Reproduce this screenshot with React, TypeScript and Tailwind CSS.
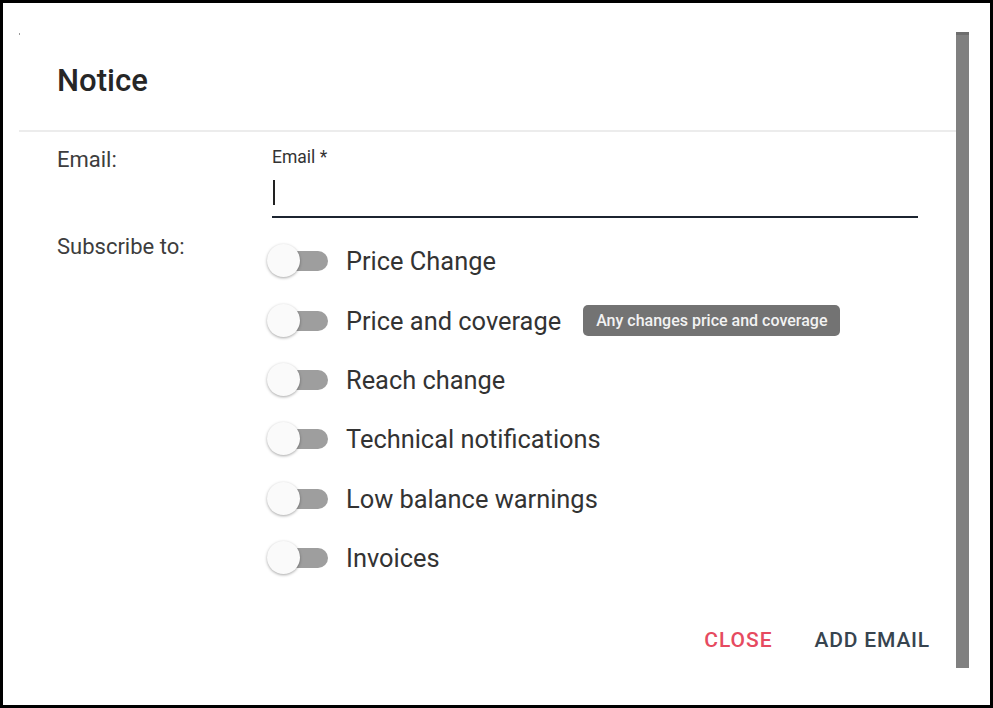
import React from "react"

const options = [
  { label: "Price Change" },
  { label: "Price and coverage", hint: "Any changes price and coverage" },
  { label: "Reach change" },
  { label: "Technical notifications" },
  { label: "Low balance warnings" },
  { label: "Invoices" },
]

function Toggle() {
  return (
    <div className="relative w-[62px] h-[34px] shrink-0">
      <div className="absolute left-[5px] top-[7px] w-[56px] h-[20px] rounded-full bg-[#9e9e9e]" />
      <div className="absolute left-0 top-0 w-[33px] h-[33px] rounded-full bg-[#fafafa] shadow-[0_1px_3px_rgba(0,0,0,0.35)]" />
    </div>
  )
}

export default function App() {
  return (
    <div className="w-[993px] h-[708px] border-[3px] border-black bg-white flex font-['Roboto','Liberation_Sans',sans-serif]">
      <div className="flex-1 flex flex-col pl-[16px]">
        <div className="mt-[30px] w-px h-[2px] bg-[#9a9a9a]" />
        <h1 className="mt-[28px] pl-[38px] text-[31px] leading-[36px] font-medium font-['Roboto_Medium','Roboto',sans-serif] text-[#262626]">Notice</h1>
        <div className="mt-[31px] h-[2px] bg-[#ececec]" />

        <div className="pl-[38px] pt-[15px]">
          <div className="flex">
            <div className="w-[215px] text-[22px] leading-[26px] text-[#3d3d3d]">Email:</div>
            <div className="w-[646px]">
              <div className="text-[17.5px] leading-[20px] text-[#333]">Email *</div>
              <div className="h-[51px] border-b-[2px] border-[#1c2430] flex items-end pb-[11px]">
                <span className="ml-[1px] w-[2px] h-[25px] bg-[#222]" />
              </div>
            </div>
          </div>

          <div className="flex mt-[13px]">
            <div className="w-[215px] pt-[3px] text-[22px] leading-[26px] text-[#3d3d3d]">Subscribe to:</div>
            <div className="-ml-[5px] mt-[0.5px] flex flex-col">
              {options.map((o) => (
                <div key={o.label} className="h-[59.4px] flex items-center">
                  <Toggle />
                  <span className="ml-[17px] text-[25.4px] leading-[30px] text-[#333]">{o.label}</span>
                  {o.hint && (
                    <span className="ml-[22px] h-[31px] px-[13px] flex items-center rounded-[5px] bg-[#737373] text-[16px] font-medium text-[#f2f2f2]">
                      {o.hint}
                    </span>
                  )}
                </div>
              ))}
            </div>
          </div>
        </div>

        <div className="mt-[33px] flex justify-end pr-[15px] gap-[20px]">
          <button className="h-[40px] px-[11px] text-[21px] font-medium tracking-[1px] text-[#e64a60]">CLOSE</button>
          <button className="h-[40px] px-[11px] text-[21px] font-medium tracking-[0.8px] text-[#37444f]">ADD EMAIL</button>
        </div>
      </div>
      <div className="w-[13px] mt-[29px] h-[636px] bg-[#808080] border-t-[3px] border-[#6e6e6e]" />
      <div className="w-[21px]" />
    </div>
  )
}
